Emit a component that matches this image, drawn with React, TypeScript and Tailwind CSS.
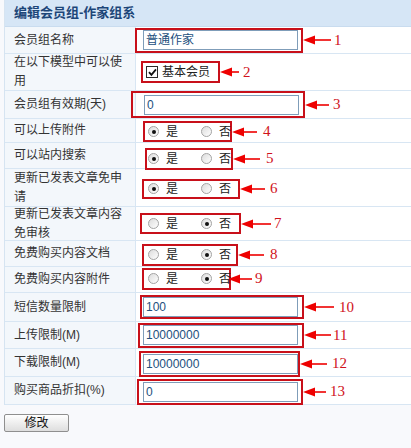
import type { ReactNode } from "react";

type Field =
  | { kind: "text"; value: string }
  | { kind: "check"; label: string }
  | { kind: "radio"; yes: boolean };

type Row = {
  label: string;
  h: number;
  field: Field;
  // red note box around the control
  box: { ml: number; w: number; h: number; pl: number; mt?: number };
  arrow: { w: number; ml?: number; gap: number };
  num: number;
};

const rows: Row[] = [
  { label: "会员组名称", h: 27, field: { kind: "text", value: "普通作家" }, box: { ml: -1, w: 168, h: 25, pl: 6 }, arrow: { w: 28, gap: 3 }, num: 1 },
  { label: "在以下模型中可以使用", h: 37, field: { kind: "check", label: "基本会员" }, box: { ml: 5, w: 79, h: 22, pl: 3 }, arrow: { w: 19, gap: 4 }, num: 2 },
  { label: "会员组有效期(天)", h: 28, field: { kind: "text", value: "0" }, box: { ml: -5, w: 174, h: 27, pl: 11 }, arrow: { w: 24, gap: 4 }, num: 3 },
  { label: "可以上传附件", h: 24, field: { kind: "radio", yes: true }, box: { ml: 7, w: 89, h: 21, pl: 3, mt: 2 }, arrow: { w: 25, gap: 6 }, num: 4 },
  { label: "可以站内搜索", h: 26, field: { kind: "radio", yes: true }, box: { ml: 9, w: 88, h: 22, pl: 1, mt: 6 }, arrow: { w: 27, gap: 6 }, num: 5 },
  { label: "更新已发表文章免申请", h: 38, field: { kind: "radio", yes: true }, box: { ml: 6, w: 98, h: 20, pl: 4, mt: 2 }, arrow: { w: 25, gap: 5 }, num: 6 },
  { label: "更新已发表文章内容免审核", h: 34, field: { kind: "radio", yes: false }, box: { ml: 4, w: 101, h: 21, pl: 6 }, arrow: { w: 30, gap: 3 }, num: 7 },
  { label: "免费购买内容文档", h: 26, field: { kind: "radio", yes: false }, box: { ml: 6, w: 96, h: 22, pl: 4, mt: 2 }, arrow: { w: 26, gap: 6 }, num: 8 },
  { label: "免费购买内容附件", h: 26, field: { kind: "radio", yes: false }, box: { ml: 6, w: 89, h: 22, pl: 4, mt: -2 }, arrow: { w: 24, ml: -3, gap: 3 }, num: 9 },
  { label: "短信数量限制", h: 29, field: { kind: "text", value: "100" }, box: { ml: 4, w: 164, h: 24, pl: 1 }, arrow: { w: 30, gap: 5 }, num: 10 },
  { label: "上传限制(M)", h: 27, field: { kind: "text", value: "10000000" }, box: { ml: 2, w: 166, h: 25, pl: 3 }, arrow: { w: 27, gap: 2 }, num: 11 },
  { label: "下载限制(M)", h: 28, field: { kind: "text", value: "10000000" }, box: { ml: 3, w: 161, h: 26, pl: 2, mt: 2 }, arrow: { w: 27, gap: 5 }, num: 12 },
  { label: "购买商品折扣(%)", h: 28, field: { kind: "text", value: "0" }, box: { ml: 1, w: 166, h: 26, pl: 4, mt: 2 }, arrow: { w: 23, gap: 4 }, num: 13 },
];

function Radio({ on }: { on: boolean }) {
  return (
    <span className="flex h-[11px] w-[11px] items-center justify-center rounded-full border border-[#a3a3a3] bg-gradient-to-br from-[#dcdcdc] to-white">
      {on ? <span className="h-[4px] w-[4px] rounded-full bg-[#111]" /> : null}
    </span>
  );
}

function Control({ field }: { field: Field }) {
  if (field.kind === "text") {
    return (
      <div className="flex h-[20px] w-[155px] items-center border border-[#7f9db9] bg-white pl-[2px] text-[12px] text-[#234f7d]">
        {field.value}
      </div>
    );
  }
  if (field.kind === "check") {
    return (
      <div className="flex items-center text-[12px] text-[#222]">
        <span className="flex h-[12px] w-[12px] items-center justify-center border border-[#2b2b2b] bg-white">
          <svg width="9" height="9" viewBox="0 0 9 9">
            <path d="M1 4.2 L3.4 6.8 L8 1.4" fill="none" stroke="#111" strokeWidth="1.8" />
          </svg>
        </span>
        <span className="ml-[4px]">{field.label}</span>
      </div>
    );
  }
  return (
    <div className="flex items-center text-[12px] text-[#222]">
      <Radio on={field.yes} />
      <span className="ml-[7px]">是</span>
      <span className="ml-[23px]">
        <Radio on={!field.yes} />
      </span>
      <span className="ml-[7px]">否</span>
    </div>
  );
}

function Arrow({ w }: { w: number }) {
  return (
    <svg width={w} height="10" viewBox={`0 0 ${w} 10`} className="shrink-0">
      <polygon points="0,5 12,0.5 12,9.5" fill="#ee0000" />
      <line x1="11" y1="5" x2={w} y2="5" stroke="#ee0000" strokeWidth="1.6" />
    </svg>
  );
}

function Note({ row, children }: { row: Row; children: ReactNode }) {
  const { box, arrow } = row;
  return (
    <div className="flex items-center" style={{ marginLeft: box.ml, marginTop: box.mt ?? 0 }}>
      <div
        className="flex shrink-0 items-center border-2 border-[#c8101a]"
        style={{ width: box.w, height: box.h, paddingLeft: box.pl }}
      >
        {children}
      </div>
      <div style={{ marginLeft: arrow.ml ?? 0 }}>
        <Arrow w={arrow.w} />
      </div>
      <span
        className="font-['Liberation_Serif',serif] text-[15px] leading-none text-[#d0121b]"
        style={{ marginLeft: arrow.gap }}
      >
        {row.num}
      </span>
    </div>
  );
}

export default function App() {
  return (
    <div className="min-h-[448px] w-[411px] overflow-hidden bg-[#f8f9fc] font-['Liberation_Sans','Noto_Sans_CJK_SC',sans-serif]">
      <div className="ml-[4px] w-[420px] border-l border-[#d6e4f1] bg-white">
        <div className="flex h-[27px] items-center border-b border-[#c9dcef] bg-[#d6e6f6] pl-[9px] text-[13px] font-bold text-[#1d4679]">
          编辑会员组-作家组系
        </div>
        {rows.map((row) => (
          <div
            key={row.num}
            className="flex border-b border-[#d8e6f3]"
            style={{ height: row.h }}
          >
            <div className="flex w-[131px] shrink-0 items-center border-r border-[#d8e6f3] bg-[#f3f7fb] pl-[9px] pr-[6px] text-[12px] leading-[19px] text-[#333]">
              <span>{row.label}</span>
            </div>
            <div className="flex flex-1 items-center">
              <Note row={row}>
                <Control field={row.field} />
              </Note>
            </div>
          </div>
        ))}
      </div>
      <button
        type="button"
        className="ml-[4px] mt-[9px] flex h-[18px] w-[65px] items-center justify-center rounded-[2px] border border-[#8f8f8f] bg-gradient-to-b from-white to-[#dedede] text-[12px] text-[#111]"
      >
        修改
      </button>
    </div>
  );
}
